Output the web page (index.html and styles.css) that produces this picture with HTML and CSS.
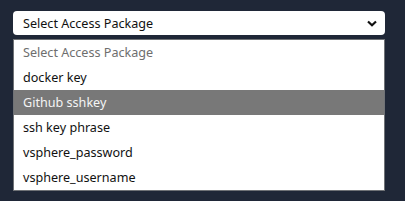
FILE: index.html
```html
<!DOCTYPE html>
<html>
<head>
    <title>Access Package</title>
    <link rel="stylesheet" href="styles.css">
</head>
<body>
    <div class="panel">
        <div class="picker">
            <span>Select Access Package</span>
            <svg class="chevron" width="10" height="7" viewBox="0 0 10 7">
                <path d="M1 1.5 L5 5.2 L9 1.5" fill="none" stroke="#111" stroke-width="2.2"/>
            </svg>
        </div>
        <ul class="options">
            <li class="placeholder">Select Access Package</li>
            <li>docker key</li>
            <li class="active">Github sshkey</li>
            <li>ssh key phrase</li>
            <li>vsphere_password</li>
            <li>vsphere_username</li>
        </ul>
    </div>
</body>
</html>
```

FILE: styles.css
```css
body {
    margin: 0;
    background-color: #1f2737;
    font-family: "Noto Sans", "Open Sans", sans-serif;
    height: 201px;
    overflow: hidden;
}

.panel {
    width: 372px;
    padding: 11px 0 0 13px;
}

.picker {
    height: 24px;
    background-color: white;
    border-radius: 4px;
    display: flex;
    align-items: center;
    justify-content: space-between;
    padding: 0 8px 0 10px;
    font-size: 12.6px;
    color: #111;
}

.chevron {
    margin-top: 1px;
}

.options {
    list-style: none;
    margin: 4px 0 0 0;
    padding: 0;
    background-color: white;
    border: 1px solid #6f7276;
}

.options li {
    height: 25px;
    line-height: 25px;
    padding-left: 9px;
    font-size: 12.6px;
    color: #111;
}

.options .placeholder {
    color: #6e6e6e;
}

.options .active {
    background-color: #787878;
    color: #f4f4f4;
}
```
